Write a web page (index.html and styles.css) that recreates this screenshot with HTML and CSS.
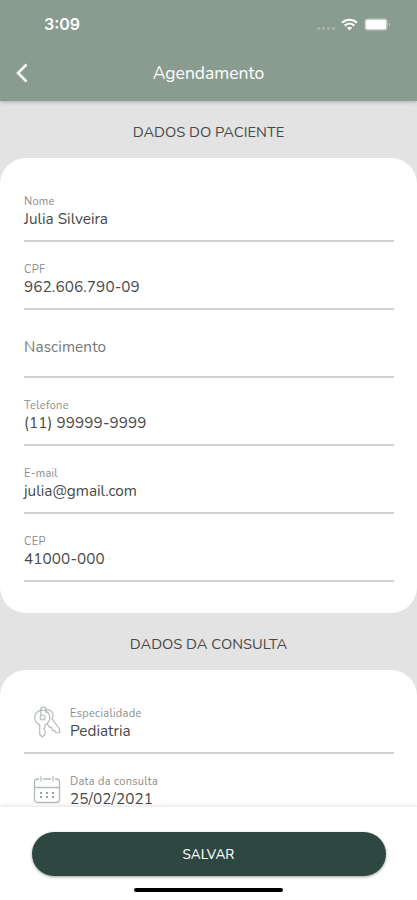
FILE: index.html
```html
<!DOCTYPE html>
<html lang="pt-BR">
<head>
  <meta charset="UTF-8" />
  <meta name="viewport" content="width=device-width, initial-scale=1" />
  <title>Agendamento</title>
  <link rel="stylesheet" href="styles.css">
</head>
<body>
  <header class="topo">
    <div class="status">
      <span class="hora">3:09</span>
      <div class="sinais">
        <span class="pontos"><i></i><i></i><i></i><i></i></span>
        <svg class="wifi" viewBox="0 0 17 13" width="17" height="13">
          <g fill="none" stroke="#fff" stroke-width="2.1">
            <path d="M1 4.7C5.2.7 11.8.7 16 4.7" />
            <path d="M3.7 7.6c2.8-2.5 6.8-2.5 9.6 0" />
          </g>
          <path d="M5.8 9.8c1.6-1.3 3.8-1.3 5.4 0L8.5 12.6z" fill="#fff" />
        </svg>
        <svg class="bateria" viewBox="0 0 27 13" width="27" height="13">
          <rect x=".5" y=".5" width="23" height="12" rx="3" fill="none" stroke="#a5b3aa" />
          <rect x="1.5" y="1.5" width="21" height="10" rx="1.5" fill="#fff" />
          <path d="M25 4.5c1.8.7 1.8 3.3 0 4z" fill="#b3c1b7" />
        </svg>
      </div>
    </div>
    <div class="barra">
      <svg class="voltar" viewBox="0 0 13 20" width="13" height="20">
        <path d="M11.5 1.5L3 10l8.5 8.5" fill="none" stroke="#fff" stroke-width="2.5" />
      </svg>
      <h1>Agendamento</h1>
    </div>
  </header>

  <main class="conteudo">
    <h2>DADOS DO PACIENTE</h2>
    <section class="cartao">
      <div class="campo">
        <label>Nome</label>
        <div class="valor">Julia Silveira</div>
      </div>
      <div class="campo">
        <label>CPF</label>
        <div class="valor numero">962.606.790-09</div>
      </div>
      <div class="campo vazio">
        <div class="valor">Nascimento</div>
      </div>
      <div class="campo">
        <label>Telefone</label>
        <div class="valor numero">(11) 99999-9999</div>
      </div>
      <div class="campo">
        <label>E-mail</label>
        <div class="valor">julia@gmail.com</div>
      </div>
      <div class="campo">
        <label>CEP</label>
        <div class="valor numero">41000-000</div>
      </div>
    </section>

    <h2>DADOS DA CONSULTA</h2>
    <section class="cartao">
      <div class="campo com-icone">
        <svg class="icone" viewBox="0 0 28 32" width="28" height="32">
          <g fill="#fff" stroke="#b3bcb8" stroke-width="1.2" stroke-linejoin="round" stroke-linecap="round">
            <path d="M11 4.5c4-2 8.500 0 9 4 .2 2-.2 3.200-1 4.300l7.500 10.200.3 3.500-3.600.5-1.600-2.400-2.200-.3-.7-2.600-2.300-.6-1.900-3z" />
            <path d="M6.700 19C3.500 17.300 1.700 14.500 1.700 11.500 1.700 7.200 5 4.200 9.300 4.200s7.600 3 7.600 7.300c0 3-1.800 5.800-4.900 7.500v2.400l-1.200 1.500 1.200 1.600v4L9.400 31l-2.700-2.500z" />
            <rect x="7.200" y="9" width="4.800" height="4.800" rx="2" />
            <path d="M7.800 9.500V4C7.800.2 13.200.2 13.200 4v3" fill="none" />
          </g>
        </svg>
        <div>
          <label>Especialidade</label>
          <div class="valor">Pediatria</div>
        </div>
      </div>
      <div class="campo com-icone">
        <svg class="icone" viewBox="0 0 28 32" width="28" height="32">
          <g fill="none" stroke="#b3bcb8" stroke-width="1.3" stroke-linecap="round">
            <rect x="1.500" y="5" width="25" height="23.500" rx="3" />
            <path d="M1.500 13.500h25" />
            <path d="M8 2.700v4M20 2.700v4" stroke="#fff" stroke-width="4" />
            <path d="M8 2.700v4M20 2.700v4" />
          </g>
          <g fill="#98a49f">
            <rect x="7" y="18" width="2" height="2" />
            <rect x="13" y="18" width="2" height="2" />
            <rect x="19" y="18" width="2" height="2" />
            <rect x="7" y="22" width="2" height="2" />
            <rect x="13" y="22" width="2" height="2" />
            <rect x="19" y="22" width="2" height="2" />
          </g>
        </svg>
        <div>
          <label>Data da consulta</label>
          <div class="valor numero">25/02/2021</div>
        </div>
      </div>
    </section>
  </main>

  <footer class="rodape">
    <button class="salvar">SALVAR</button>
    <div class="indicador"></div>
  </footer>
</body>
</html>
```
FILE: styles.css
```css
* { box-sizing: border-box; }
html, body {
  margin: 0; padding: 0; height: 100vh;
  font-family: Nunito, Lato, sans-serif;
  background: #e3e3e3; color: #484848; overflow: hidden;
}
body { display: flex; flex-direction: column; }
h1, h2 { margin: 0; font-weight: 400; }

/* Topo */
.topo {
  height: 101px; flex: none; background: #8a9c90; color: #fff;
  box-shadow: 0 1px 4px rgba(0, 0, 0, 0.25); z-index: 1;
}
.status {
  height: 48px; padding: 0 26px 0 44px;
  display: flex; justify-content: space-between; align-items: center;
}
.hora { font-family: Inter, sans-serif; font-size: 16px; font-weight: 600; }
.sinais { display: flex; align-items: center; }
.pontos { display: flex; gap: 2px; padding-top: 8px; margin-right: 6px; }
.pontos i { width: 3px; height: 3px; border-radius: 50%; background: #a8b7ad; }
.wifi { margin-right: 6px; }
.barra {
  height: 50px; padding: 0 15px;
  display: grid; grid-template-columns: 13px 1fr 13px; align-items: center;
}
.barra h1 { font-size: 17.5px; text-align: center; }

/* Conteúdo */
.conteudo { flex: 1; min-height: 0; overflow: hidden; }
h2 {
  height: 57px; line-height: 63px;
  font-size: 14.7px; text-align: center;
}
.cartao { background: #fff; border-radius: 26px; padding: 16px 23px 31px 24px; }
.campo {
  height: 68px; padding-top: 20px; border-bottom: 2px solid #d2d2d2;
}
.campo label {
  display: block; font-size: 11px; line-height: 15px; color: #8c8c8c;
  letter-spacing: 0.3px;
}
.valor { font-size: 15.3px; line-height: 20px; }
.numero { letter-spacing: 0.1px; }
.vazio { padding-top: 27px; }
.vazio .valor { color: #777; letter-spacing: 0.1px; }
.com-icone { display: flex; gap: 9px; padding-left: 9px; }
.icone { flex: none; }

/* Rodapé */
.rodape {
  height: 93px; flex: none; padding-top: 25px; background: #fff;
  box-shadow: 0 -1px 4px rgba(0, 0, 0, 0.12); z-index: 1;
  display: flex; flex-direction: column; align-items: center;
}
.salvar {
  width: 354px; height: 44px; border: none; border-radius: 22px; flex: none;
  background: #2e4841; color: #fff; font-family: inherit; font-size: 13.5px; font-weight: 500;
  box-shadow: 0 1px 3px rgba(0, 0, 0, 0.4); cursor: pointer;
}
.indicador {
  width: 149px; height: 4px; margin-top: 12px;
  background: #000; border-radius: 2px;
}
```
